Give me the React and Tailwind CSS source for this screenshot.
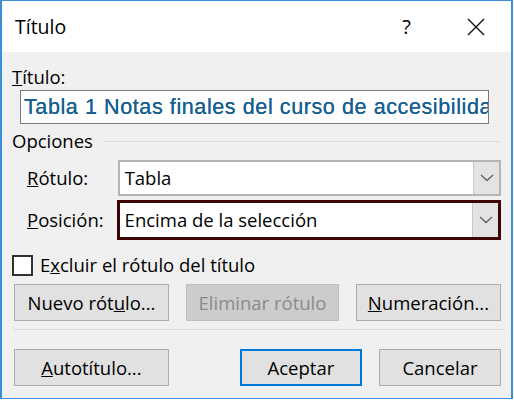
import React from "react";

const font = { fontFamily: '"Open Sans", "Liberation Sans", sans-serif' };

function Chevron() {
  return (
    <svg width="14" height="8" viewBox="0 0 14 8" fill="none">
      <path d="M1 1 L7 6.5 L13 1" stroke="#606060" strokeWidth="1.3" />
    </svg>
  );
}

function Combo({ value, focused }) {
  return (
    <div
      className={
        focused
          ? "flex h-[40px] w-[386px] border-[3px] border-[#3d0404] bg-white"
          : "flex h-[36px] w-[385px] ml-[1px] border-[2px] border-[#b4b4b4] bg-white"
      }
    >
      <div className="flex flex-1 items-center pl-[5px] text-[18.5px] leading-[24px] text-black">{value}</div>
      <div className="flex w-[26px] items-center justify-center border-l border-[#c8c8c8] bg-[#e3e3e3]">
        <Chevron />
      </div>
    </div>
  );
}

function Button({ children, className = "", disabled, primary }) {
  return (
    <div
      className={
        "flex h-[37px] items-center justify-center text-[18.5px] leading-[24px] " +
        (disabled
          ? "border border-[#bfbfbf] bg-[#cccccc] text-[#8a8a8a] "
          : primary
          ? "border-2 border-[#0078d7] bg-[#e1e1e1] text-black "
          : "border border-[#adadad] bg-[#e1e1e1] text-black ") +
        className
      }
    >
      {children}
    </div>
  );
}

export default function App() {
  return (
    <div className="h-[400px] w-[514px] bg-white" style={font}>
      <div className="flex h-[399px] w-[513px] flex-col border border-[#3c8fd6] border-l-2 border-r-2">
        {/* Title bar */}
        <div className="flex h-[51px] items-center bg-white">
          <span className="ml-[13px] text-[19.5px] leading-[26px] text-black">Título</span>
          <span className="ml-auto mr-[56px] text-[20px] leading-[26px] text-black">?</span>
          <svg className="mr-[26px]" width="18" height="18" viewBox="0 0 18 18">
            <path d="M1 1 L17 17 M17 1 L1 17" stroke="#111" strokeWidth="1.4" />
          </svg>
        </div>

        {/* Body */}
        <div className="flex flex-1 flex-col bg-[#f0f0f0] px-[10px]">
          <div className="mt-[13px] text-[18.5px] leading-[24px] text-black">
            <u>T</u>ítulo:
          </div>
          <div
            className="ml-[8px] mt-[1px] flex h-[34px] w-[469px] items-center overflow-hidden whitespace-nowrap border border-[#7a7a7a] bg-white pl-[3px] text-[21.5px] tracking-[0.6px] text-[#17608f] [text-shadow:0_0_0.4px_#17608f]"
            style={{ fontFamily: '"Liberation Sans", Arial, sans-serif' }}
          >
            Tabla 1 Notas finales del curso de accesibilidad
          </div>

          <div className="mt-[6px] flex items-center">
            <span className="text-[18.5px] leading-[22px] text-black">Opciones</span>
            <div className="ml-[10px] h-px flex-1 bg-[#dcdcdc]" />
          </div>

          <div className="mt-[8px] flex items-center">
            <span className="w-[105px] pl-[15px] text-[18.5px] leading-[24px] text-black">
              <u>R</u>ótulo:
            </span>
            <Combo value="Tabla" />
          </div>
          <div className="mt-[4px] flex items-center">
            <span className="w-[105px] pl-[15px] text-[18.5px] leading-[24px] text-black">
              <u>P</u>osición:
            </span>
            <Combo value="Encima de la selección" focused />
          </div>

          <div className="mt-[13px] flex items-center">
            <div className="h-[21px] w-[21px] border-2 border-[#333] bg-white" />
            <span className="ml-[7px] text-[18.5px] leading-[24px] text-black">
              E<u>x</u>cluir el rótulo del título
            </span>
          </div>

          <div className="mt-[7px] flex">
            <Button className="ml-[2px] w-[156px]">
              Nuevo rót<u>u</u>lo...
            </Button>
            <Button className="ml-[17px] w-[154px]" disabled>
              Eliminar rótulo
            </Button>
            <Button className="ml-[17px] w-[146px]">
              <u>N</u>umeración...
            </Button>
          </div>

          <div className="ml-[2px] mt-[8px] h-px w-[491px] bg-[#dadada]" />

          <div className="mt-[19px] flex">
            <Button className="ml-[2px] w-[156px]">
              <u>A</u>utotítulo...
            </Button>
            <Button className="ml-[71px] w-[123px]" primary>
              Aceptar
            </Button>
            <Button className="ml-[17px] w-[123px]">Cancelar</Button>
          </div>
        </div>
      </div>
    </div>
  );
}
